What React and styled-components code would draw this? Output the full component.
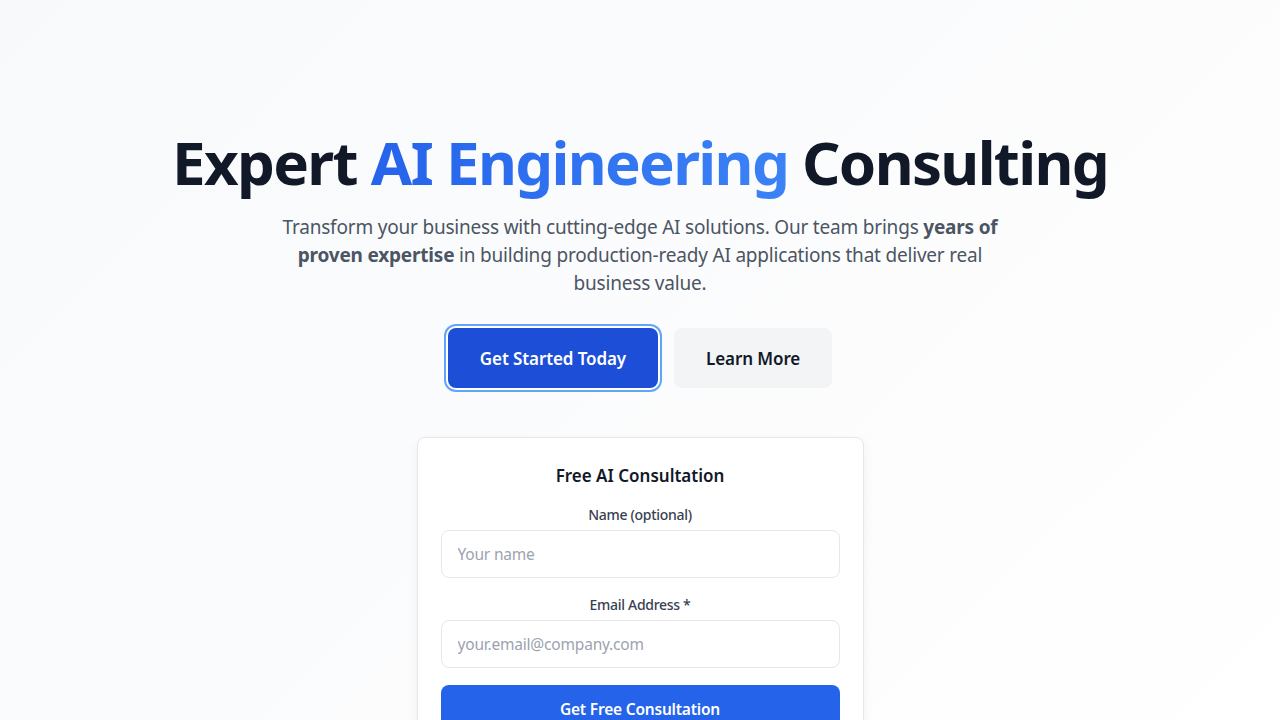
import styled, { createGlobalStyle } from "styled-components";

const GlobalStyle = createGlobalStyle`
  * { box-sizing: border-box; }
  body {
    margin: 0;
    font-family: "Noto Sans", "Open Sans", sans-serif;
    color: #111827;
  }
`;

const Page = styled.main`
  min-height: 100vh;
  background: linear-gradient(135deg, #f8f9fb 0%, #ffffff 100%);
  padding: 126px 24px 48px;
  display: flex;
  flex-direction: column;
  align-items: center;
  text-align: center;
`;

const Title = styled.h1`
  margin: 0 0 15px;
  font-size: 60px;
  line-height: 72px;
  font-weight: 700;
  color: #111827;
  letter-spacing: -1.7px;
`;

const Accent = styled.span`
  background: linear-gradient(90deg, #2563eb, #3b82f6);
  -webkit-background-clip: text;
  background-clip: text;
  color: transparent;
`;

const Lead = styled.p`
  margin: 0 0 31px;
  max-width: 760px;
  font-size: 19px;
  line-height: 28px;
  letter-spacing: -0.2px;
  color: #4b5563;

  strong {
    font-weight: 700;
  }
`;

const Actions = styled.div`
  display: flex;
  gap: 16px;
  margin-bottom: 49px;
`;

const Button = styled.button`
  font-family: inherit;
  font-size: 17px;
  font-weight: 600;
  letter-spacing: -0.1px;
  height: 60px;
  padding: 0 32px;
  border: none;
  border-radius: 8px;
  cursor: pointer;
  background: ${(p) => (p.$primary ? "#1d4ed8" : "#f3f4f6")};
  color: ${(p) => (p.$primary ? "#ffffff" : "#111827")};
  box-shadow: ${(p) =>
    p.$focus ? "0 0 0 2px #ffffff, 0 0 0 4px #60a5fa" : "none"};
`;

const Card = styled.form`
  width: 447px;
  background: #ffffff;
  border: 1px solid #e5e7eb;
  border-radius: 8px;
  box-shadow: 0 4px 12px rgba(0, 0, 0, 0.05);
  padding: 24px 23px;
  display: flex;
  flex-direction: column;
`;

const CardTitle = styled.h2`
  margin: 0 0 15px;
  font-size: 17px;
  line-height: 28px;
  font-weight: 600;
  color: #111827;
`;

const Field = styled.div`
  display: flex;
  flex-direction: column;
  gap: 5px;
  margin-bottom: 17px;
`;

const Label = styled.label`
  font-size: 14px;
  line-height: 20px;
  font-weight: 500;
  letter-spacing: -0.3px;
  color: #374151;
`;

const Input = styled.input`
  height: 48px;
  width: 100%;
  padding: 0 16px;
  border: 1px solid #e5e7eb;
  border-radius: 8px;
  font-family: inherit;
  font-size: 15.5px;
  letter-spacing: -0.2px;
  color: #111827;
  background: #ffffff;
  outline: none;

  &::placeholder {
    color: #9ca3af;
  }
`;

const Submit = styled.button`
  height: 48px;
  width: 100%;
  border: none;
  border-radius: 8px;
  background: #2563eb;
  color: #ffffff;
  font-family: inherit;
  font-size: 15.5px;
  font-weight: 600;
  letter-spacing: -0.2px;
`;

export default function App() {
  return (
    <>
      <GlobalStyle />
      <Page>
        <Title>
          Expert <Accent>AI Engineering</Accent> Consulting
        </Title>
        <Lead>
          Transform your business with cutting-edge AI solutions. Our team
          brings <strong>years of proven expertise</strong> in building
          production-ready AI applications that deliver real business value.
        </Lead>
        <Actions>
          <Button $primary $focus>
            Get Started Today
          </Button>
          <Button>Learn More</Button>
        </Actions>
        <Card onSubmit={(e) => e.preventDefault()}>
          <CardTitle>Free AI Consultation</CardTitle>
          <Field>
            <Label htmlFor="name">Name (optional)</Label>
            <Input id="name" placeholder="Your name" />
          </Field>
          <Field>
            <Label htmlFor="email">Email Address *</Label>
            <Input id="email" type="email" placeholder="your.email@company.com" />
          </Field>
          <Submit type="submit">Get Free Consultation</Submit>
        </Card>
      </Page>
    </>
  );
}
